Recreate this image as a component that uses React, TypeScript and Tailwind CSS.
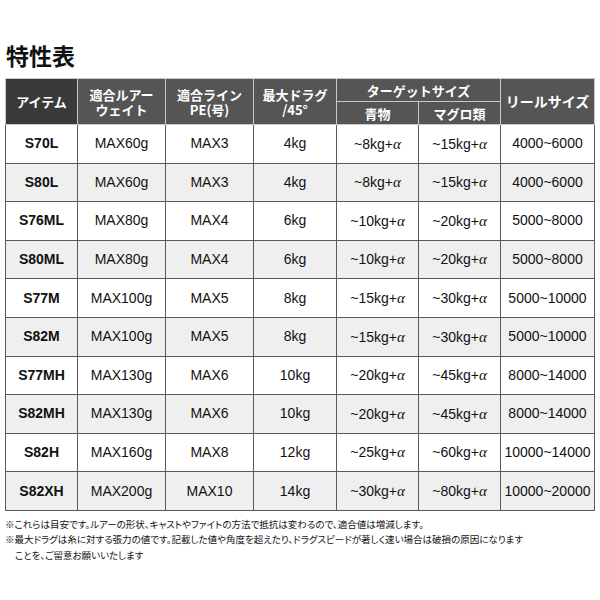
const rows = [
  { item: "S70L", lure: "MAX60g", line: "MAX3", drag: "4kg", ao: "~8kg+", tuna: "~15kg+", reel: "4000~6000" },
  { item: "S80L", lure: "MAX60g", line: "MAX3", drag: "4kg", ao: "~8kg+", tuna: "~15kg+", reel: "4000~6000" },
  { item: "S76ML", lure: "MAX80g", line: "MAX4", drag: "6kg", ao: "~10kg+", tuna: "~20kg+", reel: "5000~8000" },
  { item: "S80ML", lure: "MAX80g", line: "MAX4", drag: "6kg", ao: "~10kg+", tuna: "~20kg+", reel: "5000~8000" },
  { item: "S77M", lure: "MAX100g", line: "MAX5", drag: "8kg", ao: "~15kg+", tuna: "~30kg+", reel: "5000~10000" },
  { item: "S82M", lure: "MAX100g", line: "MAX5", drag: "8kg", ao: "~15kg+", tuna: "~30kg+", reel: "5000~10000" },
  { item: "S77MH", lure: "MAX130g", line: "MAX6", drag: "10kg", ao: "~20kg+", tuna: "~45kg+", reel: "8000~14000" },
  { item: "S82MH", lure: "MAX130g", line: "MAX6", drag: "10kg", ao: "~20kg+", tuna: "~45kg+", reel: "8000~14000" },
  { item: "S82H", lure: "MAX160g", line: "MAX8", drag: "12kg", ao: "~25kg+", tuna: "~60kg+", reel: "10000~14000" },
  { item: "S82XH", lure: "MAX200g", line: "MAX10", drag: "14kg", ao: "~30kg+", tuna: "~80kg+", reel: "10000~20000" },
];

const jp = "font-['Noto_Sans_CJK_JP',sans-serif]";
const th = `border border-[#c8c8c8] text-white font-bold text-[13px] leading-[15px] text-center align-middle ${jp}`;
const td = "border border-[#5a5a5a] text-center align-middle text-[14px] text-[#111]";

function Alpha() {
  return <span className="italic font-['Liberation_Serif',serif] text-[15px]">α</span>;
}

export default function App() {
  return (
    <div className="w-[600px] h-[600px] bg-white pl-[5px] font-['Liberation_Sans',Arial,sans-serif]">
      <h1 className={`pt-[40px] h-[78px] text-[23px] leading-[30px] font-bold text-[#111] pl-[1px] ${jp}`}>特性表</h1>
      <table className="w-[589px] border-collapse border-[1.5px] border-[#333] table-fixed">
        <colgroup>
          <col className="w-[72px]" />
          <col className="w-[88px]" />
          <col className="w-[88px]" />
          <col className="w-[83px]" />
          <col className="w-[82px]" />
          <col className="w-[82px]" />
          <col className="w-[94px]" />
        </colgroup>
        <thead>
          <tr className="h-[23px]">
            <th rowSpan={2} className={`${th} bg-[#3a3a3a]`}>アイテム</th>
            <th rowSpan={2} className={`${th} bg-[#555]`}>適合ルアー<br />ウェイト</th>
            <th rowSpan={2} className={`${th} bg-[#555]`}>適合ライン<br />PE(号)</th>
            <th rowSpan={2} className={`${th} bg-[#555]`}>最大ドラグ<br />/45°</th>
            <th colSpan={2} className={`${th} bg-[#555]`}>ターゲットサイズ</th>
            <th rowSpan={2} className={`${th} bg-[#555] text-[14px]`}>リールサイズ</th>
          </tr>
          <tr className="h-[23px]">
            <th className={`${th} bg-[#555]`}>青物</th>
            <th className={`${th} bg-[#555]`}>マグロ類</th>
          </tr>
        </thead>
        <tbody>
          {rows.map((r, i) => (
            <tr key={r.item} className={`h-[38.6px] ${i % 2 === 1 ? "bg-[#efefef]" : "bg-white"}`}>
              <td className={`${td} font-bold`}>{r.item}</td>
              <td className={td}>{r.lure}</td>
              <td className={td}>{r.line}</td>
              <td className={td}>{r.drag}</td>
              <td className={td}>{r.ao}<Alpha /></td>
              <td className={td}>{r.tuna}<Alpha /></td>
              <td className={td}>{r.reel}</td>
            </tr>
          ))}
        </tbody>
      </table>
      <div className={`mt-[6px] text-[9.5px] leading-[15.5px] text-[#111] [font-feature-settings:'palt'] ${jp}`}>
        <p>※これらは目安です。ルアーの形状、キャストやファイトの方法で抵抗は変わるので、適合値は増減します。</p>
        <p>※最大ドラグは糸に対する張力の値です。記載した値や角度を超えたり、ドラグスピードが著しく速い場合は破損の原因になります</p>
        <p className="pl-[10px]">ことを、ご留意お願いいたします</p>
      </div>
    </div>
  );
}
